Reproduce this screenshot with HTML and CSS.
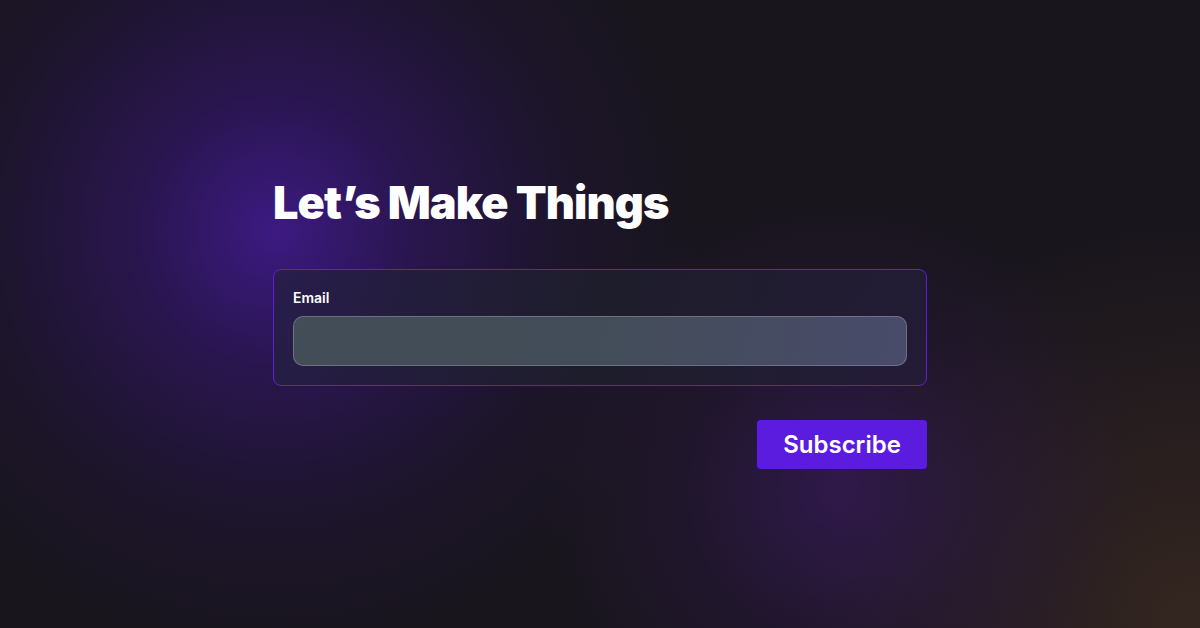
FILE: index.html
```html
<!DOCTYPE html>
<html lang="en">
<head>
<meta charset="utf-8">
<title>Let's Make Things</title>
<link rel="stylesheet" href="styles.css">
</head>
<body>
<main class="page">
  <section class="wrap">
    <h1 class="title">Let’s Make Things</h1>
    <form class="card">
      <label class="label" for="email">Email</label>
      <input class="input" id="email" type="email">
    </form>
    <div class="actions">
      <button class="btn" type="button">Subscribe</button>
    </div>
  </section>
</main>
</body>
</html>
```

FILE: styles.css
```css
* { box-sizing: border-box; }
html, body { margin: 0; height: 100%; }
body {
  width: 1200px;
  height: 628px;
  overflow: hidden;
  font-family: Inter, "Noto Sans", sans-serif;
  background-color: #18151c;
  background-image:
    radial-gradient(circle at 275px 230px, rgba(62, 26, 135, 0.95) 0, rgba(52, 22, 110, 0.6) 140px, rgba(40, 20, 80, 0.28) 290px, rgba(24, 21, 28, 0) 430px),
    radial-gradient(circle at 840px 490px, rgba(55, 26, 90, 0.75) 0, rgba(45, 24, 70, 0.4) 150px, rgba(24, 21, 28, 0) 300px),
    radial-gradient(circle at 1190px 620px, rgba(52, 38, 32, 1) 0, rgba(45, 33, 32, 0.6) 220px, rgba(24, 21, 28, 0) 400px);
}
.page {
  height: 100%;
  display: flex;
  justify-content: center;
  padding-top: 173px;
}
.wrap {
  width: 654px;
  display: flex;
  flex-direction: column;
}
.title {
  margin: 0 0 36px;
  color: #ffffff;
  font-family: Inter, sans-serif;
  font-weight: 900;
  font-size: 45px;
  line-height: 60px;
  letter-spacing: -0.9px;
}
.card {
  margin: 0;
  border: 1px solid #5a22d8;
  border-radius: 8px;
  background: linear-gradient(100deg, rgba(38, 30, 70, 0.85), rgba(30, 30, 44, 0.9) 50%, rgba(36, 28, 56, 0.85));
  padding: 20px 19px 19px;
  display: flex;
  flex-direction: column;
}
.label {
  color: #ffffff;
  font-size: 14px;
  font-weight: 600;
  line-height: 16px;
  margin-bottom: 10px;
}
.input {
  height: 50px;
  width: 100%;
  border-radius: 10px;
  border: 1px solid rgba(140, 145, 165, 0.55);
  background: linear-gradient(100deg, #424d57 0%, #434d59 50%, #494b6a 100%);
  outline: none;
}
.actions {
  display: flex;
  justify-content: flex-end;
  margin-top: 34px;
}
.btn {
  width: 170px;
  height: 49px;
  border: 0;
  border-radius: 4px;
  background: #5b1ce0;
  color: #ffffff;
  font-family: Inter, sans-serif;
  font-weight: 600;
  font-size: 24px;
  cursor: pointer;
}
```
